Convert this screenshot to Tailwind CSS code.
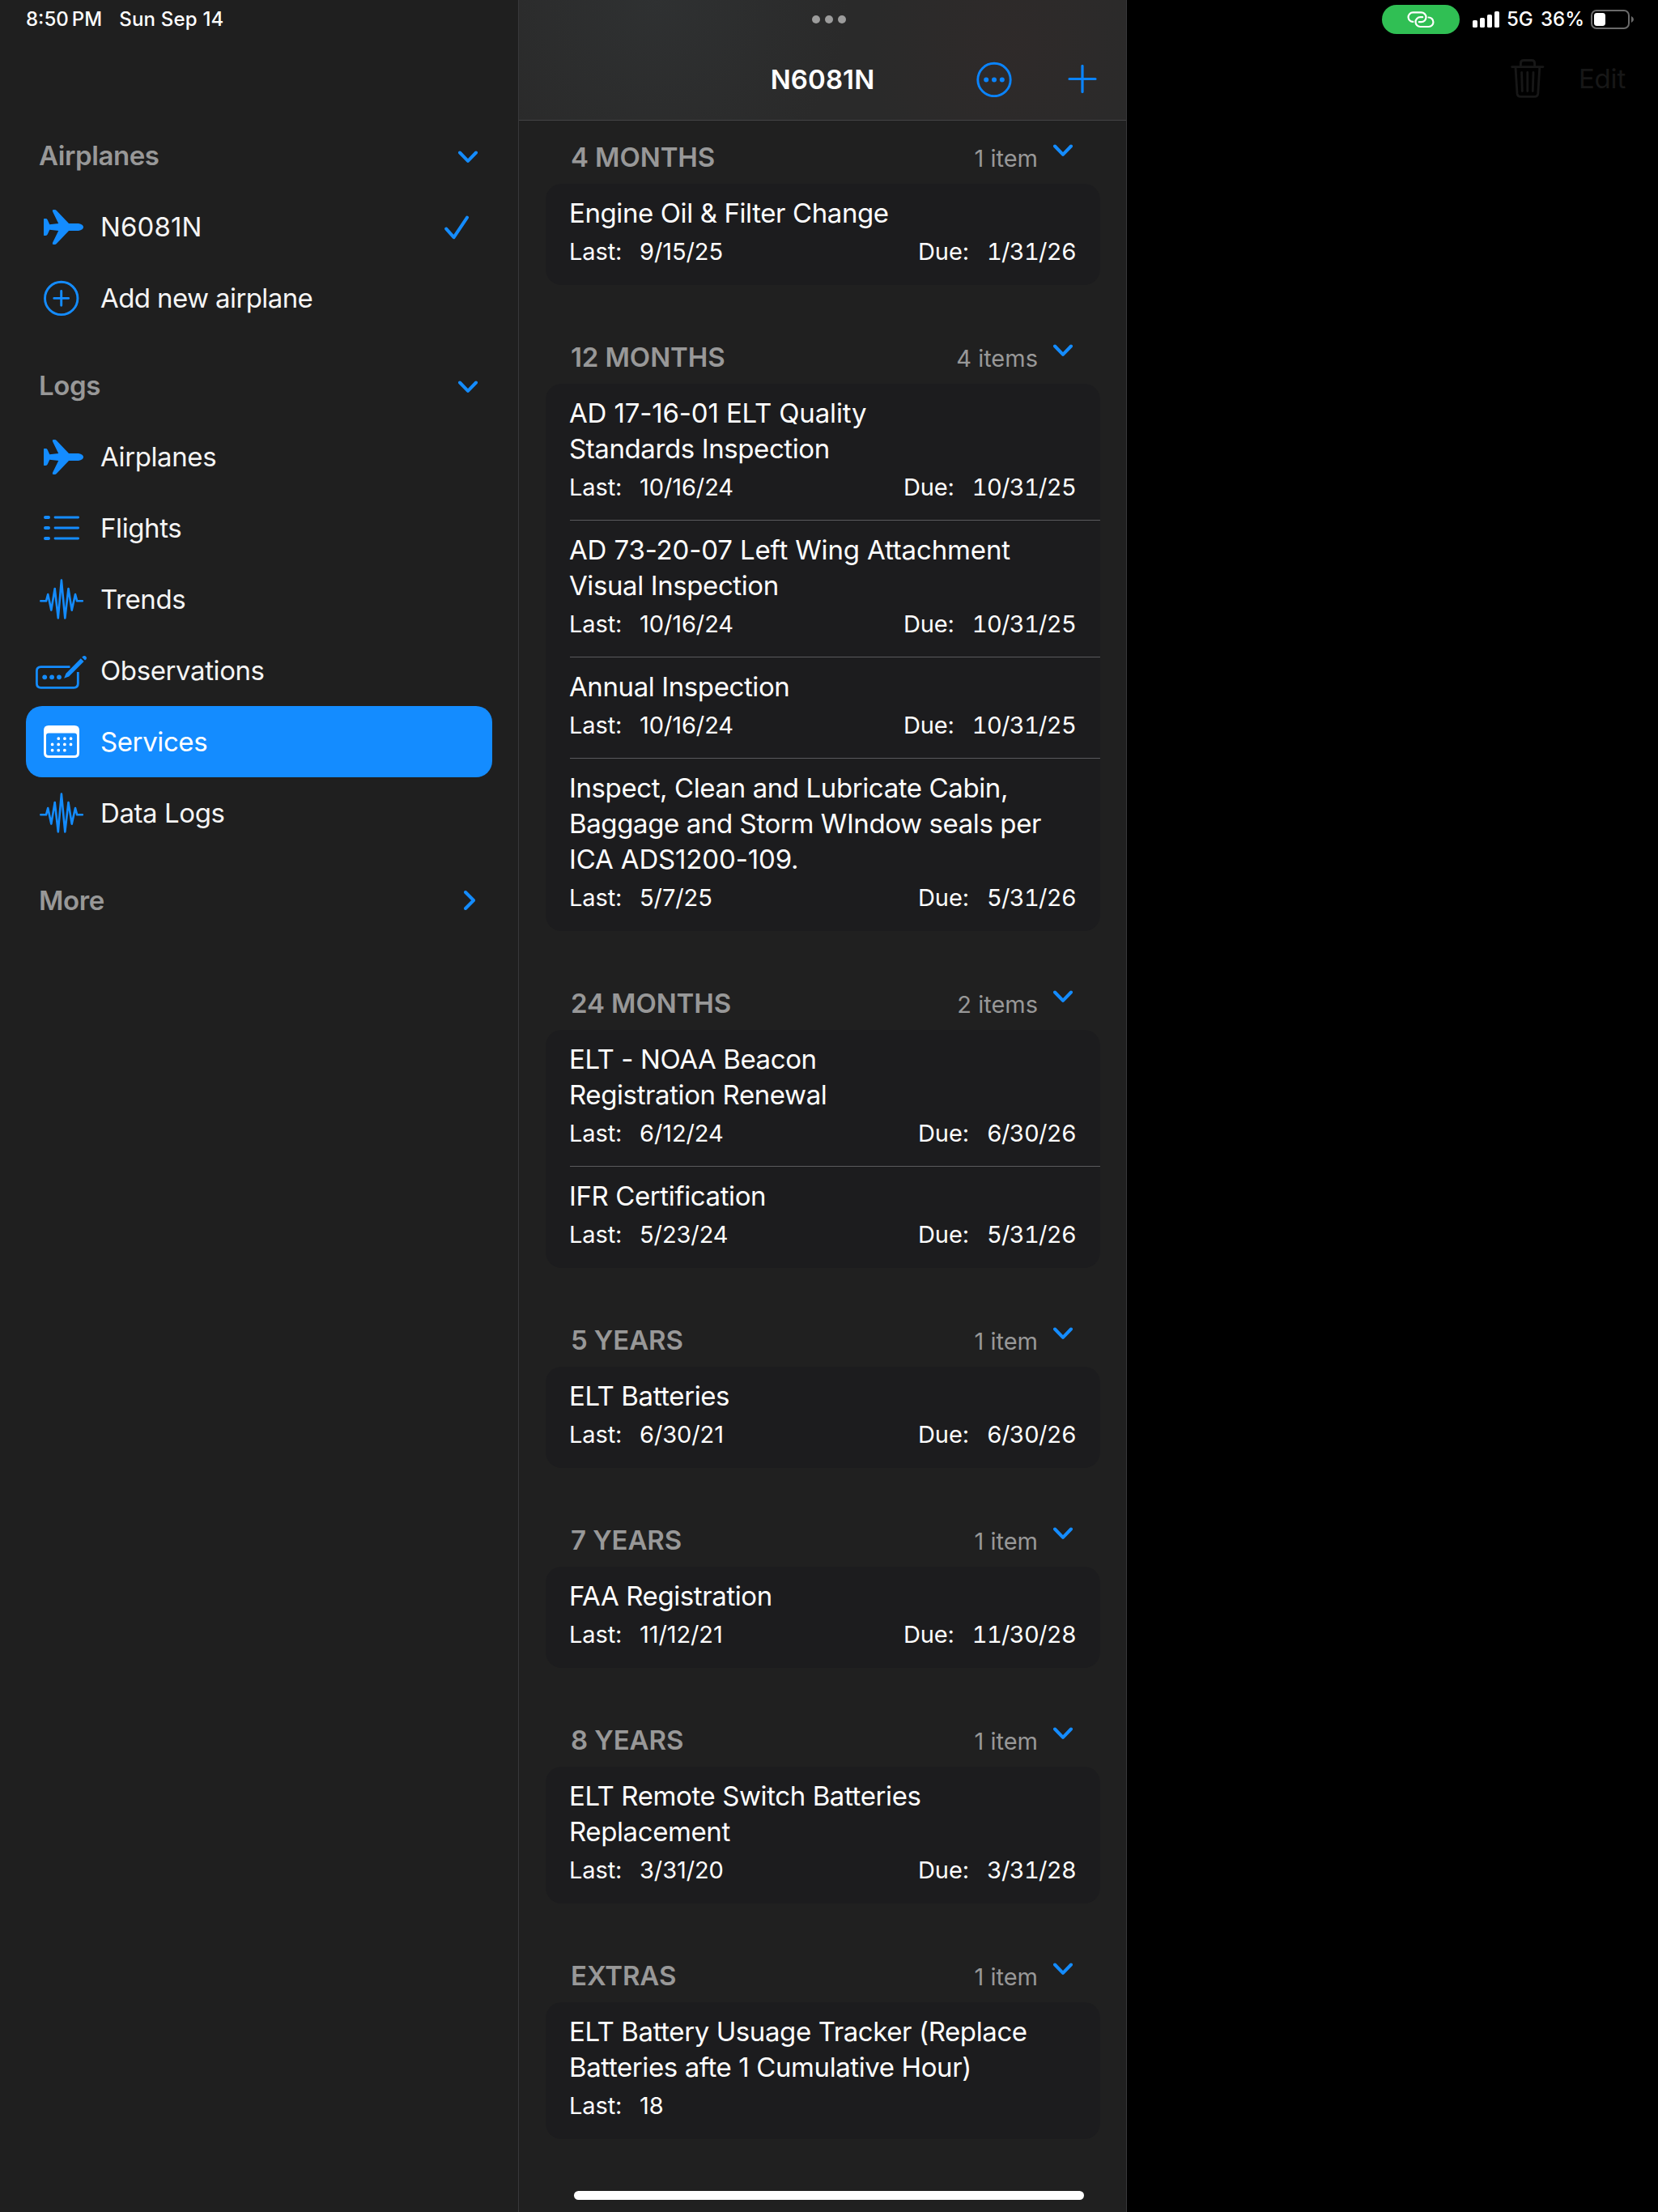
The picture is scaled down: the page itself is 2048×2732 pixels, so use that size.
<!DOCTYPE html>
<html lang="en">
<head>
    <meta charset="UTF-8">
    <meta name="viewport" content="width=device-width, initial-scale=1.0">
    <title>N6081N - Services</title>
    <script src="https://cdn.jsdelivr.net/npm/@tailwindcss/browser@4"></script>
    <style>
        body {
            font-family: Inter, 'Liberation Sans', sans-serif;
        }
        .bar-bg {
            background:
                radial-gradient(circle at 170px 0px, rgba(54, 59, 61, 0.4) 0%, rgba(54, 59, 61, 0) 240px),
                radial-gradient(circle at 610px 60px, rgba(54, 42, 41, 0.4) 0%, rgba(54, 42, 41, 0) 180px),
                #2a2a2a;
        }
    </style>
</head>
<body class="bg-black">
    <svg class="hidden">
        <symbol id="plane" viewBox="0 0 92 88">
            <path fill="currentColor" d="M22 34.5Q22 34 22.6 34H24.6Q26 34 26.7 35.4L29.3 41.2L40.2 40L33 25.2Q32.2 23 34 23H35.6Q37 23 38 24.2L53 40H65Q71 41.2 71 44.5Q71 47.8 65 49H53L38 64.8Q37 66 35.6 66H34Q32.2 66 33 63.8L40.2 49L29.3 47.8L26.7 53.6Q26 55 24.6 55H22.6Q22 55 22 54.5Z"/>
        </symbol>
        <symbol id="wave" viewBox="0 0 92 88">
            <path fill="none" stroke="currentColor" stroke-width="2.6" stroke-linecap="round" stroke-linejoin="round" d="M18.3 46.3H25L27.2 38L31.3 57.6L35.7 31L39.8 67.4L43.9 20.6L48.3 67.4L52.5 31L56.7 57.6L61 38L63.2 46.3H69.8"/>
        </symbol>
        <symbol id="chevron" viewBox="0 0 24 16">
            <path fill="none" stroke="currentColor" stroke-width="4" stroke-linecap="round" stroke-linejoin="round" d="M2 2.5L12 12.8L22 2.5"/>
        </symbol>
    </svg>

    <div class="flex w-[2048px] h-[2732px] overflow-hidden">

        <!-- Sidebar -->
        <aside class="w-[640px] shrink-0 bg-[#1f1f1f] px-8">
            <div class="flex items-center h-12 gap-[21px] text-[24px] font-medium text-white">
                <span>8:50&#8201;PM</span>
                <span class="tracking-[0.2px]">Sun Sep 14</span>
            </div>

            <nav class="pt-[80px] text-[33px] tracking-[-0.4px] text-[#f5f5f5]">
                <div class="flex items-center justify-between h-[88px] mt-5 pt-[2px] pl-4 pr-[18px] text-[#989898] font-semibold">
                    Airplanes
                    <svg class="w-6 h-4 mt-px text-[#148cff]"><use href="#chevron"/></svg>
                </div>
                <a class="flex items-center h-[88px] pt-[2px]">
                    <svg class="w-[92px] h-[88px] shrink-0 -mt-[2px] text-[#148cff]"><use href="#plane"/></svg>
                    <span class="tracking-[0.1px]">N6081N</span>
                    <svg class="ml-auto mr-[29px] w-[30px] h-[30px]" viewBox="0 0 30 30" fill="none" stroke="#148cff" stroke-width="4" stroke-linecap="round" stroke-linejoin="round"><path d="M2.2 16.6L11.6 27.2L28 2.6"/></svg>
                </a>
                <a class="flex items-center h-[88px] pt-[2px]">
                    <svg class="w-[92px] h-[88px] shrink-0 -mt-[2px]" viewBox="0 0 92 88" fill="none" stroke="#148cff" stroke-width="2.9" stroke-linecap="round"><circle cx="43.7" cy="44.4" r="20.2"/><path d="M34.8 44.4H52.6M43.7 35.5V53.3"/></svg>
                    <span class="tracking-[-0.6px]">Add new airplane</span>
                </a>

                <div class="flex items-center justify-between h-[88px] mt-5 pt-[2px] pl-4 pr-[18px] text-[#989898] font-semibold">
                    Logs
                    <svg class="w-6 h-4 mt-px text-[#148cff]"><use href="#chevron"/></svg>
                </div>
                <a class="flex items-center h-[88px] pt-[2px]">
                    <svg class="w-[92px] h-[88px] shrink-0 -mt-[2px] text-[#148cff]"><use href="#plane"/></svg>
                    Airplanes
                </a>
                <a class="flex items-center h-[88px] pt-[2px]">
                    <svg class="w-[92px] h-[88px] shrink-0 -mt-[2px]" viewBox="0 0 92 88" fill="none" stroke="#148cff" stroke-linecap="round"><path stroke-width="4" d="M24 31H28M24 44H28M24 57H28"/><path stroke-width="2.8" d="M36 31H64.6M36 44H64.6M36 57H64.6"/></svg>
                    Flights
                </a>
                <a class="flex items-center h-[88px] pt-[2px]">
                    <svg class="w-[92px] h-[88px] shrink-0 -mt-[2px] text-[#148cff]"><use href="#wave"/></svg>
                    Trends
                </a>
                <a class="flex items-center h-[88px] pt-[2px]">
                    <svg class="w-[92px] h-[88px] shrink-0 -mt-[2px]" viewBox="0 0 92 88" fill="none" stroke="#148cff" stroke-width="2.8">
                        <path d="M54.5 39.6H18.5Q13.4 39.6 13.4 44.7V60.3Q13.4 65.4 18.5 65.4H59.2Q64.3 65.4 64.3 60.3V46"/>
                        <path fill="#148cff" stroke="none" d="M47.8 53.6Q47 54 47.3 53.2L49.5 47.8L67.8 29.2L71.6 32.9L53.2 51.5ZM69.2 27.8L70.9 26.2Q72.7 25.3 74.4 27Q75.6 28.7 74.5 30.2L73 31.6Z"/>
                        <g fill="#148cff" stroke="none"><circle cx="23.2" cy="52.3" r="2.9"/><circle cx="32.1" cy="52.3" r="2.9"/><circle cx="41" cy="52.3" r="2.9"/></g>
                    </svg>
                    Observations
                </a>
                <a class="flex items-center h-[88px] pt-[2px] bg-[#148cff] rounded-[20px] text-white">
                    <svg class="w-[92px] h-[88px] shrink-0 -mt-[2px]" viewBox="0 0 92 88" fill="#fff">
                        <path fill-rule="evenodd" d="M28 24H60Q66 24 66 30V58Q66 64 60 64H28Q22 64 22 58V30Q22 24 28 24ZM28 33.6Q25 33.6 25 36.6V58Q25 61 28 61H60Q63 61 63 58V36.6Q63 33.6 60 33.6Z"/>
                        <path stroke="#fff" stroke-width="3.8" stroke-linecap="round" stroke-dasharray="0 7.63" d="M40.3 40.2H56M32.6 47.4H56M32.6 54.7H48.2"/>
                    </svg>
                    Services
                </a>
                <a class="flex items-center h-[88px] pt-[2px]">
                    <svg class="w-[92px] h-[88px] shrink-0 -mt-[2px] text-[#148cff]"><use href="#wave"/></svg>
                    Data Logs
                </a>

                <div class="flex items-center justify-between h-[88px] mt-5 pt-[2px] pl-4 pr-[21px] text-[#989898] font-semibold">
                    More
                    <svg class="w-[14px] h-6 -mt-[2px]" viewBox="0 0 14 24" fill="none" stroke="#148cff" stroke-width="4" stroke-linecap="round" stroke-linejoin="round"><path d="M2 2L12 12L2 22"/></svg>
                </div>
            </nav>
        </aside>

        <!-- Services list -->
        <main class="flex flex-col w-[752px] shrink-0 bg-[#202020] border-x border-[#38383a]">
            <header class="bar-bg h-[149px] shrink-0 border-b border-[#434345]">
                <div class="flex items-center justify-center gap-[6px] h-12 pl-[16px]">
                    <span class="size-[10px] rounded-full bg-[#9c9c9c]"></span>
                    <span class="size-[10px] rounded-full bg-[#9c9c9c]"></span>
                    <span class="size-[10px] rounded-full bg-[#9c9c9c]"></span>
                </div>
                <div class="grid grid-cols-[1fr_auto_1fr] items-center h-[100px]">
                    <span></span>
                    <h1 class="pt-[2px] text-[33px] font-semibold tracking-[0.1px] text-white">N6081N</h1>
                    <div class="flex items-center justify-end gap-[69px] pr-[36px]">
                        <svg class="w-[44px] h-[44px]" viewBox="0 0 44 44" fill="none" stroke="#0a84ff" stroke-width="2.9"><circle cx="22" cy="22.5" r="20.2"/><g fill="#0a84ff" stroke="none"><circle cx="12.2" cy="22.5" r="3"/><circle cx="22" cy="22.5" r="3"/><circle cx="31.8" cy="22.5" r="3"/></g></svg>
                        <svg class="w-[36px] h-[36px]" viewBox="0 0 36 36" fill="none" stroke="#0a84ff" stroke-width="3.2" stroke-linecap="round"><path d="M2 17.5H34M18 1.5V33.5"/></svg>
                    </div>
                </div>
            </header>

            <div id="service-list" class="pl-[33px] pr-[32px]"></div>

            <div class="w-[630px] h-[11px] mt-auto mb-[15px] ml-[68px] rounded-full bg-white"></div>
        </main>

        <!-- Detail pane, nothing selected -->
        <section class="grow bg-black">
            <div class="flex items-center justify-end h-12 pr-[29px] text-[24px] font-medium text-white">
                <span class="flex items-center justify-center w-24 h-9 rounded-full bg-[#30bf54]">
                    <svg class="w-9 h-6" viewBox="0 0 36 24" fill="none" stroke="#fff" stroke-width="2.2" stroke-linecap="round"><path d="M8.4 14.9A5.7 5.7 0 0 1 8.2 3.4H18.6A5.9 5.9 0 0 1 18.6 15.2H15.8"/><path d="M27.6 9.5A5.7 5.7 0 0 1 27.8 21H17.4A5.9 5.9 0 0 1 17.4 9.2H20.2"/></svg>
                </span>
                <svg class="ml-4 w-[33px] h-5" viewBox="0 0 33 20" fill="#fff"><rect y="11" width="6" height="9" rx="1.6"/><rect x="9" y="8" width="6" height="12" rx="1.6"/><rect x="18" y="4" width="6" height="16" rx="1.6"/><rect x="27" width="6" height="20" rx="1.6"/></svg>
                <span class="ml-[9px] w-[42px]">5G</span>
                <span class="w-[62px]">36%</span>
                <svg class="w-[54px] h-6" viewBox="0 0 54 24"><rect x="1" y="1" width="46" height="22" rx="6" fill="none" stroke="#6a6a6a" stroke-width="2"/><rect x="4" y="4" width="14" height="16" rx="3.4" fill="#fff"/><path fill="#6a6a6a" d="M50 8Q53 9.5 53 12Q53 14.5 50 16Z"/></svg>
            </div>
            <div class="flex items-center justify-end h-[100px] gap-[42px] pr-[40px] text-[33px] tracking-[-0.2px] text-[#171717]">
                <svg class="w-[42px] h-12 -mt-[2px]" viewBox="0 0 42 48" fill="none" stroke="currentColor" stroke-width="2.8" stroke-linecap="round" stroke-linejoin="round"><path d="M1.6 9.6H40M12.4 9V5Q12.4 1.5 16 1.5H26Q29.6 1.5 29.6 5V9M6 10L8 42.4Q8.4 46.4 12.4 46.4H29.4Q33.4 46.4 33.8 42.4L35.8 10M13.6 16.5L14.3 39.5M20.8 16.5V39.5M28 16.5L27.3 39.5"/></svg>
                Edit
            </div>
        </section>
    </div>

    <script>
        const groups = [
            { name: '4 MONTHS', items: [
                { title: ['Engine Oil & Filter Change'], last: '9/15/25', due: '1/31/26' }
            ]},
            { name: '12 MONTHS', items: [
                { title: ['AD 17-16-01 ELT Quality', 'Standards Inspection'], last: '10/16/24', due: '10/31/25' },
                { title: ['AD 73-20-07 Left Wing Attachment', 'Visual Inspection'], last: '10/16/24', due: '10/31/25' },
                { title: ['Annual Inspection'], last: '10/16/24', due: '10/31/25' },
                { title: ['Inspect, Clean and Lubricate Cabin,', 'Baggage and Storm WIndow seals per', 'ICA ADS1200-109.'], last: '5/7/25', due: '5/31/26' }
            ]},
            { name: '24 MONTHS', items: [
                { title: ['ELT - NOAA Beacon', 'Registration Renewal'], last: '6/12/24', due: '6/30/26' },
                { title: ['IFR Certification'], last: '5/23/24', due: '5/31/26' }
            ]},
            { name: '5 YEARS', items: [
                { title: ['ELT Batteries'], last: '6/30/21', due: '6/30/26' }
            ]},
            { name: '7 YEARS', items: [
                { title: ['FAA Registration'], last: '11/12/21', due: '11/30/28' }
            ]},
            { name: '8 YEARS', items: [
                { title: ['ELT Remote Switch Batteries', 'Replacement'], last: '3/31/20', due: '3/31/28' }
            ]},
            { name: 'EXTRAS', items: [
                { title: ['ELT Battery Usuage Tracker (Replace', 'Batteries afte 1 Cumulative Hour)'], last: '18' }
            ]}
        ];

        // lines with part numbers need looser spacing than plain words
        function renderLine(line) {
            const tracking = /\d-\d/.test(line) ? 'tracking-[-0.15px]' : 'tracking-[-0.4px]';
            return `<div class="${tracking}">${line.replace('&', '&amp;')}</div>`;
        }

        function renderItem(item, isLast) {
            const due = item.due
                ? `<span class="ml-auto">Due:</span><span class="ml-[22px] tracking-[-0.7px] tabular-nums">${item.due}</span>`
                : '';
            return `
                <li class="ml-[30px] pt-[14px] pb-[16px] pr-[30px] ${isLast ? '' : 'border-b border-[#5a5a5d]'}">
                    <div class="-ml-px text-[33px] leading-[44px] whitespace-nowrap">${item.title.map(renderLine).join('')}</div>
                    <div class="-ml-px flex text-[29px] leading-[52px] tracking-[-0.1px] ${isLast ? 'h-[51px]' : 'h-[50px]'}">
                        <span class="w-[87px]">Last:</span><span>${item.last}</span>${due}
                    </div>
                </li>`;
        }

        document.getElementById('service-list').innerHTML = groups.map((group, i) => `
            <section class="${i === 0 ? 'pt-[18px]' : 'pt-[62px]'}">
                <div class="flex h-[60px] pl-[31px] pr-[34px] text-[#989898]">
                    <h2 class="text-[33px] leading-[55px] font-semibold tracking-[-0.1px]">${group.name}</h2>
                    <span class="ml-auto text-[29px] leading-[57px]">${group.items.length} item${group.items.length > 1 ? 's' : ''}</span>
                    <svg class="ml-[19px] mt-[11px] w-6 h-4 text-[#148cff]"><use href="#chevron"/></svg>
                </div>
                <ul class="rounded-[20px] bg-[#1c1c1e] text-white">${group.items.map((item, n) => renderItem(item, n === group.items.length - 1)).join('')}</ul>
            </section>`).join('');
    </script>
</body>
</html>
